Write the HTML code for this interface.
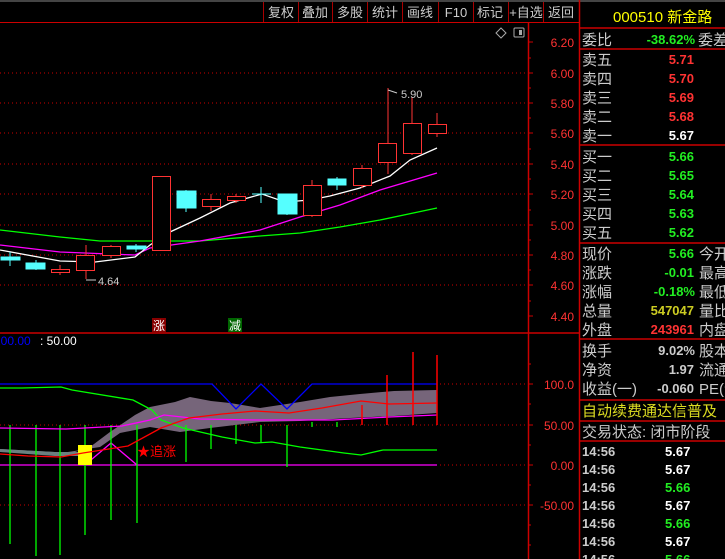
<!DOCTYPE html>
<html><head><meta charset="utf-8"><style>
body{margin:0;background:#000;width:725px;height:559px;overflow:hidden;font-family:"Liberation Sans","Noto Sans CJK SC",sans-serif}
svg{position:absolute;left:0;top:0}
text{font-family:"Liberation Sans","Noto Sans CJK SC",sans-serif}
</style></head><body>
<svg width="725" height="559" viewBox="0 0 725 559">
<rect width="725" height="559" fill="#000"/>
<line x1="0" y1="1" x2="725" y2="1" stroke="#888"/>
<!-- toolbar -->
<line x1="0" y1="22.5" x2="579" y2="22.5" stroke="#c00"/>
<g stroke="#a00"><line x1="263.5" y1="2" x2="263.5" y2="22"/><line x1="298.5" y1="2" x2="298.5" y2="22"/><line x1="332.5" y1="2" x2="332.5" y2="22"/><line x1="367.5" y1="2" x2="367.5" y2="22"/><line x1="402.5" y1="2" x2="402.5" y2="22"/><line x1="438.5" y1="2" x2="438.5" y2="22"/><line x1="473.5" y1="2" x2="473.5" y2="22"/><line x1="508.5" y1="2" x2="508.5" y2="22"/><line x1="543.5" y1="2" x2="543.5" y2="22"/></g>
<g fill="#ccc" font-size="13" text-anchor="middle"><text x="281" y="17">复权</text><text x="315" y="17">叠加</text><text x="350" y="17">多股</text><text x="385" y="17">统计</text><text x="420" y="17">画线</text><text x="456" y="17">F10</text><text x="490" y="17">标记</text><text x="526" y="17">+自选</text><text x="561" y="17">返回</text></g>
<!-- icons -->
<path d="M501 28 L506 33 L501 38 L496 33Z" fill="none" stroke="#aaa"/>
<rect x="514" y="28" width="10" height="9" fill="none" stroke="#aaa" rx="1"/><rect x="519" y="30" width="3" height="5" fill="#aaa"/>
<!-- price axis -->
<line x1="528.5" y1="23" x2="528.5" y2="559" stroke="#c00" stroke-width="1.5"/>
<g stroke="#c00" stroke-dasharray="1,3"><line x1="0" y1="73" x2="528" y2="73"/><line x1="0" y1="103" x2="528" y2="103"/><line x1="0" y1="133" x2="528" y2="133"/><line x1="0" y1="164" x2="528" y2="164"/><line x1="0" y1="194" x2="528" y2="194"/><line x1="0" y1="225" x2="528" y2="225"/><line x1="0" y1="255" x2="528" y2="255"/><line x1="0" y1="285" x2="528" y2="285"/></g>
<g stroke="#c00"><line x1="528" y1="42" x2="533" y2="42"/><line x1="528" y1="58" x2="531" y2="58"/><line x1="528" y1="73" x2="533" y2="73"/><line x1="528" y1="88" x2="531" y2="88"/><line x1="528" y1="103" x2="533" y2="103"/><line x1="528" y1="118" x2="531" y2="118"/><line x1="528" y1="133" x2="533" y2="133"/><line x1="528" y1="149" x2="531" y2="149"/><line x1="528" y1="164" x2="533" y2="164"/><line x1="528" y1="179" x2="531" y2="179"/><line x1="528" y1="194" x2="533" y2="194"/><line x1="528" y1="210" x2="531" y2="210"/><line x1="528" y1="225" x2="533" y2="225"/><line x1="528" y1="240" x2="531" y2="240"/><line x1="528" y1="255" x2="533" y2="255"/><line x1="528" y1="270" x2="531" y2="270"/><line x1="528" y1="285" x2="533" y2="285"/><line x1="528" y1="301" x2="531" y2="301"/><line x1="528" y1="316" x2="533" y2="316"/></g>
<g fill="#f33" font-size="12" text-anchor="end"><text x="574" y="47">6.20</text><text x="574" y="78">6.00</text><text x="574" y="108">5.80</text><text x="574" y="138">5.60</text><text x="574" y="169">5.40</text><text x="574" y="199">5.20</text><text x="574" y="230">5.00</text><text x="574" y="260">4.80</text><text x="574" y="290">4.60</text><text x="574" y="321">4.40</text></g>
<!-- MAs -->
<polyline fill="none" stroke="#0f0" stroke-width="1.3" points="0,230 60,237 100,241 140,241 200,241 260,236 300,233 340,227 380,220 437,208"/>
<polyline fill="none" stroke="#f0f" stroke-width="1.3" points="0,245 60,252 135,255 150,248 200,241 260,230 300,217 340,205 380,190 437,173"/>
<polyline fill="none" stroke="#fff" stroke-width="1.3" points="0,250 60,261 95,262 135,257 150,245 170,232 200,218 230,203 262,194 285,202 310,200 330,196 360,188 390,176 410,160 437,148"/>
<!-- candles -->
<g stroke="#5ff" fill="#5ff">
<line x1="10" y1="252" x2="10" y2="266"/><rect x="1" y="257" width="19" height="3"/>
<line x1="36" y1="260" x2="36" y2="270"/><rect x="26" y="263" width="19" height="6"/>
<line x1="136" y1="244" x2="136" y2="252"/><rect x="127" y="246" width="19" height="3"/>
<line x1="186" y1="190" x2="186" y2="212"/><rect x="177" y="191" width="19" height="17"/>
<line x1="261" y1="187" x2="261" y2="203"/><line x1="252" y1="194" x2="271" y2="194"/>
<line x1="287" y1="194" x2="287" y2="215"/><rect x="278" y="194" width="19" height="20"/>
<line x1="337" y1="177" x2="337" y2="190"/><rect x="328" y="179" width="18" height="6"/>
</g>
<g stroke="#f33" fill="#000">
<line x1="60" y1="265" x2="60" y2="275"/><rect x="51.5" y="269.5" width="18" height="3"/>
<line x1="86" y1="245" x2="86" y2="279"/><rect x="76.5" y="255.5" width="18" height="15"/>
<line x1="111" y1="245" x2="111" y2="258"/><rect x="102.5" y="246.5" width="18" height="9"/>
<rect x="152.5" y="176.5" width="18" height="74"/>
<line x1="211" y1="194" x2="211" y2="211"/><rect x="202.5" y="199.5" width="18" height="7"/>
<line x1="236" y1="194" x2="236" y2="203"/><rect x="227.5" y="196.5" width="18" height="4"/>
<line x1="312" y1="180" x2="312" y2="217"/><rect x="303.5" y="185.5" width="18" height="30"/>
<line x1="362" y1="165" x2="362" y2="188"/><rect x="353.5" y="168.5" width="18" height="17"/>
<line x1="388" y1="88" x2="388" y2="174"/><rect x="378.5" y="143.5" width="18" height="19"/>
<line x1="412" y1="97" x2="412" y2="155"/><rect x="403.5" y="123.5" width="18" height="30"/>
<line x1="437" y1="113" x2="437" y2="137"/><rect x="428.5" y="124.5" width="18" height="9"/>
</g>
<path d="M388 90 L397 93" stroke="#ccc"/><text x="401" y="98" fill="#ccc" font-size="11">5.90</text>
<path d="M86 280 L96 280" stroke="#ccc"/><text x="98" y="285" fill="#ccc" font-size="11">4.64</text>
<rect x="152" y="318" width="14" height="14" fill="#800"/><text x="153" y="330" fill="#fff" font-size="12">涨</text>
<rect x="228" y="318" width="14" height="14" fill="#060"/><text x="229" y="330" fill="#fff" font-size="12">减</text>
<line x1="0" y1="333" x2="579" y2="333" stroke="#c00" stroke-width="1.5"/>
<!-- lower panel -->
<text x="-6" y="345" fill="#00f" font-size="12">100.00</text><text x="40" y="345" fill="#fff" font-size="12">: 50.00</text>
<g stroke="#c00" stroke-dasharray="1,3"><line x1="0" y1="384" x2="528" y2="384"/><line x1="0" y1="425" x2="528" y2="425"/><line x1="0" y1="465" x2="528" y2="465"/><line x1="0" y1="505" x2="528" y2="505"/></g>
<g stroke="#c00"><line x1="528" y1="364" x2="531" y2="364"/><line x1="528" y1="384" x2="533" y2="384"/><line x1="528" y1="404" x2="531" y2="404"/><line x1="528" y1="425" x2="533" y2="425"/><line x1="528" y1="445" x2="531" y2="445"/><line x1="528" y1="465" x2="533" y2="465"/><line x1="528" y1="485" x2="531" y2="485"/><line x1="528" y1="505" x2="533" y2="505"/><line x1="528" y1="525" x2="531" y2="525"/><line x1="528" y1="545" x2="531" y2="545"/></g>
<g fill="#f33" font-size="12" text-anchor="end"><text x="574" y="389">100.0</text><text x="574" y="430">50.00</text><text x="574" y="470">0.00</text><text x="574" y="510">-50.00</text></g>
<polygon fill="#76657a" points="0,449 55,452 75,452 90,447 110,432 135,415 150,407 175,402 190,397 211,401 230,403 260,408 300,402 330,397 360,394 394,391 437,390 437,413 394,416 350,418 300,421 260,422 210,428 180,432 150,427 120,433 100,447 55,454 0,452"/>
<polygon fill="#6a8080" points="0,449 55,452 80,452 80,456 55,456 0,452"/>
<line x1="0" y1="465" x2="437" y2="465" stroke="#f0f" stroke-width="1.3"/>
<polyline fill="none" stroke="#f0f" stroke-width="1.3" points="85,465 111,443 137,465"/>
<g stroke="#0f0" stroke-width="1.3"><line x1="10" y1="425" x2="10" y2="544"/><line x1="36" y1="425" x2="36" y2="556"/><line x1="60" y1="425" x2="60" y2="555"/><line x1="85" y1="425" x2="85" y2="535"/><line x1="111" y1="425" x2="111" y2="520"/><line x1="137" y1="425" x2="137" y2="523"/><line x1="186" y1="425" x2="186" y2="462"/><line x1="211" y1="425" x2="211" y2="449"/><line x1="236" y1="425" x2="236" y2="444"/><line x1="261" y1="425" x2="261" y2="442"/><line x1="287" y1="425" x2="287" y2="467"/><line x1="312" y1="422" x2="312" y2="427"/><line x1="337" y1="422" x2="337" y2="427"/></g>
<rect x="78" y="445" width="14" height="20" fill="#ff0"/>
<polyline fill="none" stroke="#00f" stroke-width="1.3" points="0,384 212,384 236,409 261,384 287,409 312,384 437,384"/>
<polyline fill="none" stroke="#0f0" stroke-width="1.3" points="0,388 22,388 61,387 72,390 133,400 152,410 161,420 183,428 222,437 255,443 272,442 300,447 344,453 361,455 383,450 437,450"/>
<polyline fill="none" stroke="#f0f" stroke-width="1.3" points="0,428 66,429 122,426 150,420 164,415 200,419 255,420 333,420 389,417 437,415"/>
<polyline fill="none" stroke="#f00" stroke-width="1.3" points="0,454 28,456 61,457 83,453 128,446 161,428 189,418 222,414 255,411 289,413 322,408 361,401 389,404 437,403"/>
<g stroke="#f00" stroke-width="1.5"><line x1="362" y1="405" x2="362" y2="425"/><line x1="387" y1="375" x2="387" y2="425"/><line x1="413" y1="352" x2="413" y2="425"/><line x1="437" y1="355" x2="437" y2="425"/></g>
<text x="137" y="456" fill="#f00" font-size="13">★追涨</text>
<!-- right panel -->
<line x1="579.5" y1="0" x2="579.5" y2="559" stroke="#c00" stroke-width="1.5"/>
<g stroke="#c00" stroke-width="1.5"><line x1="580" y1="28" x2="725" y2="28"/><line x1="580" y1="49" x2="725" y2="49"/><line x1="580" y1="145" x2="725" y2="145"/><line x1="580" y1="243" x2="725" y2="243"/><line x1="580" y1="339" x2="725" y2="339"/><line x1="580" y1="400" x2="725" y2="400"/><line x1="580" y1="421" x2="725" y2="421"/><line x1="580" y1="441" x2="725" y2="441"/></g>
<text x="613" y="22" fill="#ff0" font-size="15">000510 新金路</text>
<g font-size="15" fill="#ccc"><text x="582" y="45">委比</text><text x="582" y="65">卖五</text><text x="582" y="84">卖四</text><text x="582" y="103">卖三</text><text x="582" y="122">卖二</text><text x="582" y="141">卖一</text>
<text x="582" y="162">买一</text><text x="582" y="181">买二</text><text x="582" y="200">买三</text><text x="582" y="219">买四</text><text x="582" y="238">买五</text>
<text x="582" y="259">现价</text><text x="582" y="278">涨跌</text><text x="582" y="297">涨幅</text><text x="582" y="316">总量</text><text x="582" y="335">外盘</text>
<text x="582" y="356">换手</text><text x="582" y="375">净资</text><text x="582" y="394">收益(一)</text><text x="582" y="437">交易状态: 闭市阶段</text>
<text x="698" y="45">委差</text><text x="699" y="259">今开</text><text x="699" y="278">最高</text><text x="699" y="297">最低</text><text x="699" y="316">量比</text><text x="699" y="335">内盘</text><text x="699" y="356">股本</text><text x="699" y="375">流通</text><text x="699" y="394">PE(动)</text></g>
<g font-size="13" font-weight="bold" text-anchor="end">
<text x="695" y="44" fill="#2e2">-38.62%</text>
<text x="694" y="64" fill="#f33">5.71</text><text x="694" y="83" fill="#f33">5.70</text><text x="694" y="102" fill="#f33">5.69</text><text x="694" y="121" fill="#f33">5.68</text><text x="694" y="140" fill="#fff">5.67</text>
<text x="694" y="161" fill="#2e2">5.66</text><text x="694" y="180" fill="#2e2">5.65</text><text x="694" y="199" fill="#2e2">5.64</text><text x="694" y="218" fill="#2e2">5.63</text><text x="694" y="237" fill="#2e2">5.62</text>
<text x="694" y="258" fill="#2e2">5.66</text><text x="694" y="277" fill="#2e2">-0.01</text><text x="695" y="296" fill="#2e2">-0.18%</text><text x="694" y="315" fill="#cc2">547047</text><text x="694" y="334" fill="#f33">243961</text>
<text x="695" y="355" fill="#ccc">9.02%</text><text x="694" y="374" fill="#ccc">1.97</text><text x="694" y="393" fill="#ccc">-0.060</text></g>
<text x="582" y="416" fill="#dd2" font-size="15">自动续费通达信普及</text>
<g font-size="13" font-weight="bold"><g fill="#ccc"><text x="582" y="456">14:56</text><text x="582" y="474">14:56</text><text x="582" y="492">14:56</text><text x="582" y="510">14:56</text><text x="582" y="528">14:56</text><text x="582" y="546">14:56</text><text x="582" y="564">14:56</text></g>
<text x="665" y="456" fill="#fff">5.67</text><text x="665" y="474" fill="#fff">5.67</text><text x="665" y="492" fill="#2e2">5.66</text><text x="665" y="510" fill="#fff">5.67</text><text x="665" y="528" fill="#2e2">5.66</text><text x="665" y="546" fill="#fff">5.67</text><text x="665" y="564" fill="#2e2">5.66</text></g>
</svg>
</body></html>
